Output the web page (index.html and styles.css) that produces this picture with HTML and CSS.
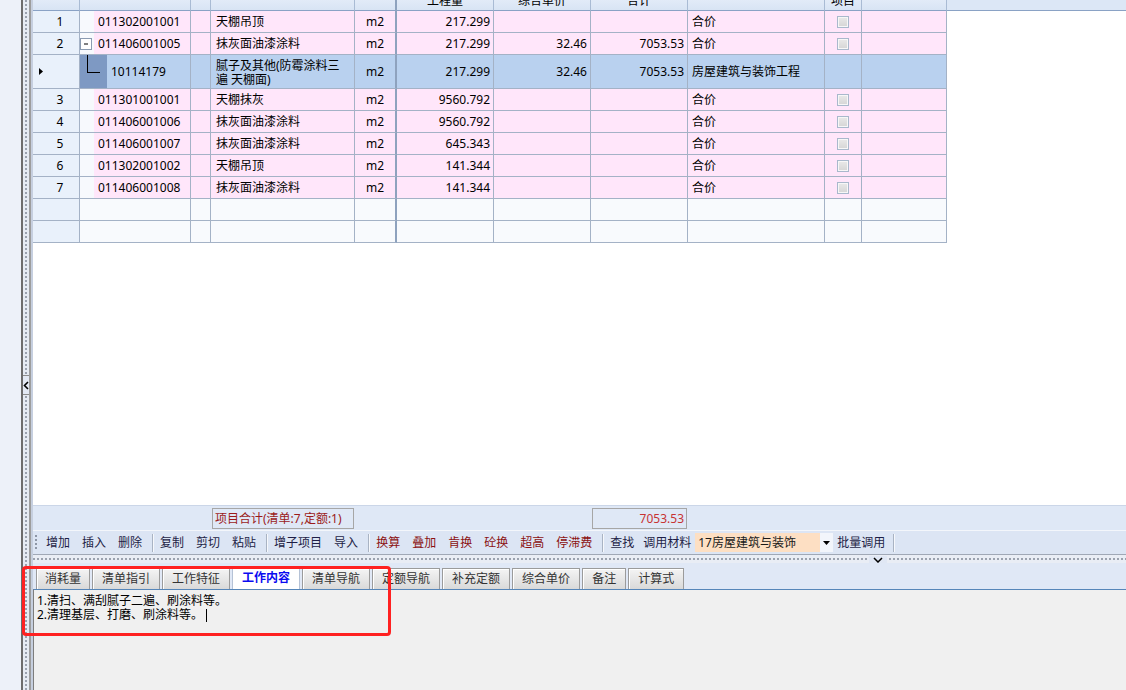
FILE: index.html
```html
<!DOCTYPE html>
<html lang="zh-CN">
<head>
<meta charset="utf-8">
<title>清单</title>
<link rel="stylesheet" href="styles.css">
</head>
<body>
<div class="app">
  <div class="side"></div>
  <div class="vsplit">
    <div class="vbtn"><svg width="6" height="9" viewBox="0 0 6 9"><polyline points="5,1 1.5,4.5 5,8" fill="none" stroke="#000" stroke-width="1.6"/></svg></div>
  </div>
  <div class="main">
    <div class="gridwrap">
      <div class="grid">
        <div class="row hdr">
          <div class="c"></div><div class="c"></div><div class="c"></div><div class="c"></div><div class="c u"></div>
          <div class="c"><span class="ht">工程量</span></div>
          <div class="c"><span class="ht">综合单价</span></div>
          <div class="c"><span class="ht">合计</span></div>
          <div class="c"></div>
          <div class="c"><span class="ht">项目</span></div>
          <div class="c"></div>
        </div>

        <div class="row">
          <div class="c rn">1</div>
          <div class="c code"><span class="ind"></span><span class="tx">011302001001</span></div>
          <div class="c"></div><div class="c nm">天棚吊顶</div><div class="c u">m2</div>
          <div class="c n">217.299</div><div class="c n"></div><div class="c n"></div>
          <div class="c t">合价</div><div class="c cb"><span class="chk"></span></div><div class="c"></div>
        </div>

        <div class="row">
          <div class="c rn">2</div>
          <div class="c code"><span class="ind"><svg class="exp" width="12" height="12" viewBox="0 0 12 12"><rect x="0.5" y="0.5" width="11" height="11" fill="#fff" stroke="#8b9bb2"/><line x1="4" y1="6" x2="8" y2="6" stroke="#000"/></svg></span><span class="tx">011406001005</span></div>
          <div class="c"></div><div class="c nm">抹灰面油漆涂料</div><div class="c u">m2</div>
          <div class="c n">217.299</div><div class="c n">32.46</div><div class="c n">7053.53</div>
          <div class="c t">合价</div><div class="c cb"><span class="chk"></span></div><div class="c"></div>
        </div>

        <div class="row tall sel">
          <div class="c rn cur"><svg width="4" height="7" viewBox="0 0 4 7"><polygon points="0,0 4,3.5 0,7" fill="#000"/></svg></div>
          <div class="c code"><span class="ind"><span class="conn"></span></span><span class="tx">10114179</span></div>
          <div class="c"></div><div class="c nm wrap">腻子及其他(防霉涂料三<br>遍 天棚面)</div><div class="c u">m2</div>
          <div class="c n">217.299</div><div class="c n">32.46</div><div class="c n">7053.53</div>
          <div class="c t">房屋建筑与装饰工程</div><div class="c cb"></div><div class="c"></div>
        </div>

        <div class="row">
          <div class="c rn">3</div>
          <div class="c code"><span class="ind"></span><span class="tx">011301001001</span></div>
          <div class="c"></div><div class="c nm">天棚抹灰</div><div class="c u">m2</div>
          <div class="c n">9560.792</div><div class="c n"></div><div class="c n"></div>
          <div class="c t">合价</div><div class="c cb"><span class="chk"></span></div><div class="c"></div>
        </div>

        <div class="row">
          <div class="c rn">4</div>
          <div class="c code"><span class="ind"></span><span class="tx">011406001006</span></div>
          <div class="c"></div><div class="c nm">抹灰面油漆涂料</div><div class="c u">m2</div>
          <div class="c n">9560.792</div><div class="c n"></div><div class="c n"></div>
          <div class="c t">合价</div><div class="c cb"><span class="chk"></span></div><div class="c"></div>
        </div>

        <div class="row">
          <div class="c rn">5</div>
          <div class="c code"><span class="ind"></span><span class="tx">011406001007</span></div>
          <div class="c"></div><div class="c nm">抹灰面油漆涂料</div><div class="c u">m2</div>
          <div class="c n">645.343</div><div class="c n"></div><div class="c n"></div>
          <div class="c t">合价</div><div class="c cb"><span class="chk"></span></div><div class="c"></div>
        </div>

        <div class="row">
          <div class="c rn">6</div>
          <div class="c code"><span class="ind"></span><span class="tx">011302001002</span></div>
          <div class="c"></div><div class="c nm">天棚吊顶</div><div class="c u">m2</div>
          <div class="c n">141.344</div><div class="c n"></div><div class="c n"></div>
          <div class="c t">合价</div><div class="c cb"><span class="chk"></span></div><div class="c"></div>
        </div>

        <div class="row">
          <div class="c rn">7</div>
          <div class="c code"><span class="ind"></span><span class="tx">011406001008</span></div>
          <div class="c"></div><div class="c nm">抹灰面油漆涂料</div><div class="c u">m2</div>
          <div class="c n">141.344</div><div class="c n"></div><div class="c n"></div>
          <div class="c t">合价</div><div class="c cb"><span class="chk"></span></div><div class="c"></div>
        </div>

        <div class="row empty">
          <div class="c rn"></div><div class="c"></div><div class="c"></div><div class="c"></div><div class="c u"></div>
          <div class="c"></div><div class="c"></div><div class="c"></div><div class="c"></div><div class="c"></div><div class="c"></div>
        </div>
        <div class="row empty">
          <div class="c rn"></div><div class="c"></div><div class="c"></div><div class="c"></div><div class="c u"></div>
          <div class="c"></div><div class="c"></div><div class="c"></div><div class="c"></div><div class="c"></div><div class="c"></div>
        </div>
      </div>
    </div>

    <div class="sumbar">
      <div class="sb"></div><div class="sb"></div><div class="sb"></div>
      <div class="sb"><div class="box lbl">项目合计(清单:7,定额:1)</div></div>
      <div class="sb"></div><div class="sb"></div><div class="sb"></div>
      <div class="sb"><div class="box val">7053.53</div></div>
      <div class="sb"></div><div class="sb"></div><div class="sb"></div>
    </div>

    <div class="toolbar">
      <span class="grip"></span>
      <span class="ti">增加</span><span class="ti">插入</span><span class="ti">删除</span>
      <span class="sep"></span>
      <span class="ti">复制</span><span class="ti">剪切</span><span class="ti">粘贴</span>
      <span class="sep"></span>
      <span class="ti">增子项目</span><span class="ti">导入</span>
      <span class="sep"></span>
      <span class="ti r">换算</span><span class="ti r">叠加</span><span class="ti r">肯换</span><span class="ti r">砼换</span><span class="ti r">超高</span><span class="ti r">停滞费</span>
      <span class="sep"></span>
      <span class="ti">查找</span><span class="ti nar">调用材料</span>
      <span class="combo"><span class="cv">17房屋建筑与装饰</span><span class="ca"><svg width="7" height="4" viewBox="0 0 7 4"><polygon points="0,0 7,0 3.5,4" fill="#000"/></svg></span></span>
      <span class="ti bat">批量调用</span>
      <span class="sep"></span>
    </div>

    <div class="hsplit">
      <span class="hbtn"><svg width="10" height="6" viewBox="0 0 10 6"><polyline points="1,1 5,5 9,1" fill="none" stroke="#000" stroke-width="1.5"/></svg></span>
    </div>

    <div class="tabbar">
      <span class="tab w8">消耗量</span>
      <span class="tab">清单指引</span>
      <span class="tab">工作特征</span>
      <span class="tab on">工作内容</span>
      <span class="tab">清单导航</span>
      <span class="tab">定额导航</span>
      <span class="tab">补充定额</span>
      <span class="tab">综合单价</span>
      <span class="tab w9">备注</span>
      <span class="tab w9">计算式</span>
    </div>

    <div class="content">
      <div>1.清扫、满刮腻子二遍、刷涂料等。</div>
      <div>2.清理基层、打磨、刷涂料等。<span class="caret"></span></div>
    </div>
  </div>
</div>
<div class="annot"></div>
</body>
</html>
```

FILE: styles.css
```css
html, body {
  margin: 0;
  padding: 0;
}
body {
  width: 1126px;
  height: 690px;
  overflow: hidden;
  position: relative;
  font-family: "Noto Sans", "Noto Sans CJK SC", sans-serif;
  font-size: 12px;
  color: #000;
  background: #fff;
}
.app {
  display: flex;
  height: 690px;
}
.side {
  width: 21px;
  flex: none;
  background: #edf1f9;
}
.vsplit {
  width: 12px;
  flex: none;
  box-sizing: border-box;
  background:
    linear-gradient(to right, #6c6c6c 0 2px, transparent 2px 8px, #9d9d9d 8px 10px, #c6cfdf 10px 12px),
    repeating-linear-gradient(to bottom, #9aa1ae 0 2px, transparent 2px 4px) 4px 0 / 2px 100% no-repeat,
    #e6ebf3;
}
.vbtn {
  margin-top: 375px;
  margin-left: 2px;
  width: 6px;
  height: 20px;
  box-sizing: border-box;
  background: #e3e9f4;
  border-top: 1px solid #8c8c8c;
  border-bottom: 1px solid #8c8c8c;
  display: flex;
  align-items: center;
  justify-content: center;
}
.main {
  flex: 1;
  display: flex;
  flex-direction: column;
  min-width: 0;
}
.gridwrap {
  height: 505px;
  flex: none;
  overflow: hidden;
  background: linear-gradient(to bottom, #dce7f6 0 10px, #8aa2c5 10px 11px, #fff 11px);
}
.grid {
  width: 914px;
}
.row {
  display: grid;
  grid-template-columns: 47px 111px 20px 144px 42px 97px 97px 97px 137px 37px 85px;
  height: 22px;
}
.row.hdr { height: 11px; }
.row.tall { height: 34px; }
.c {
  box-sizing: border-box;
  border-right: 1px solid #a4b2c6;
  border-bottom: 1px solid #a4b2c6;
  display: flex;
  align-items: center;
  overflow: hidden;
  white-space: nowrap;
  background: #ffe6fa;
  line-height: 14px;
}
.hdr .c {
  background: linear-gradient(#e2ebf8, #d8e4f4);
  border-bottom-color: #8aa2c5;
  border-right-color: #a9bbd4;
  align-items: flex-start;
  justify-content: center;
}
.ht {
  margin-top: -6px;
}
.c.u {
  justify-content: center;
  border-right: 2px solid #8ea2be;
}
.c.n {
  justify-content: flex-end;
  padding-right: 3px;
}
.c.t { padding-left: 4px; }
.c.nm { padding-left: 5px; }
.c.wrap {
  white-space: normal;
  padding-top: 2px;
  line-height: 14px;
}
.c.cb { justify-content: center; }
.c.rn {
  background: #e9f1fb;
  justify-content: center;
  padding-left: 8px;
}
.c.rn.cur {
  justify-content: flex-start;
  padding-left: 6px;
}
.c.code {
  padding: 0;
  align-items: stretch;
}
.ind {
  width: 14px;
  flex: none;
  background: #f7f9fd;
  display: flex;
  align-items: center;
}
.tx {
  display: flex;
  align-items: center;
  padding-left: 4px;
  flex: 1;
}
.sel .c { background: #b9d1ef; }
.sel .c.rn { background: #e9f1fb; }
.sel .ind {
  width: 27px;
  background: #7e99c3;
  display: block;
}
.conn {
  display: block;
  margin-left: 7px;
  width: 12px;
  height: 17px;
  border-left: 1px solid #000;
  border-bottom: 1px solid #000;
}
.empty .c { background: #f8fafd; }
.empty .c.rn { background: #e9f1fb; }
.chk {
  width: 12px;
  height: 12px;
  box-sizing: border-box;
  border: 1px solid #a9b8cc;
  background: linear-gradient(#e9e9e9, #d5d5d5);
  box-shadow: inset 0 0 0 1px #f7f7f7;
}

.sumbar {
  height: 25px;
  flex: none;
  box-sizing: border-box;
  border-top: 1px solid #cbd6e8;
  background: #dfe8f6;
  display: grid;
  grid-template-columns: 47px 111px 20px 144px 42px 97px 97px 97px 137px 37px 85px;
  width: 100%;
}
.sb {
  padding-top: 2px;
}
.box {
  height: 21px;
  box-sizing: border-box;
  border: 1px solid #a6a6a6;
  margin: 0 1px;
  line-height: 19px;
  white-space: nowrap;
  overflow: hidden;
}
.box.lbl {
  color: #9b1b1b;
  padding-left: 2px;
}
.box.val {
  color: #c73333;
  text-align: right;
  padding-right: 2px;
}

.toolbar {
  height: 24px;
  flex: none;
  box-sizing: border-box;
  border-top: 1px solid #f3f6fb;
  background: #dce5f4;
  display: flex;
  align-items: center;
  padding-left: 2px;
  white-space: nowrap;
}
.grip {
  width: 2px;
  height: 16px;
  margin-right: 3px;
  background: repeating-linear-gradient(to bottom, #8d96a6 0 2px, transparent 2px 4px);
}
.ti {
  padding: 0 6px;
  color: #1e1e46;
  line-height: 20px;
}
.ti.r { color: #8b1111; }
.ti.nar { padding: 0 4px 0 3px; }
.ti.bat { padding: 0 4px; }
.sep {
  width: 1px;
  height: 18px;
  background: #a9b3c3;
  border-right: 1px solid #f6f8fc;
  margin-left: 4px;
}
.combo {
  display: flex;
  height: 19px;
}
.cv {
  width: 122px;
  background: #fddfc3;
  padding-left: 3px;
  line-height: 19px;
  color: #1a1a1a;
}
.ca {
  width: 13px;
  background: #f2f5fb;
  display: flex;
  align-items: center;
  justify-content: center;
}

.hsplit {
  height: 9px;
  flex: none;
  box-sizing: border-box;
  border-top: 1px solid #a0a8b6;
  background:
    repeating-linear-gradient(to right, #9aa1ae 0 2px, transparent 2px 4px) 0 3px / 100% 2px no-repeat,
    #e9edf5;
  display: flex;
}
.hbtn {
  margin-left: 836px;
  width: 18px;
  height: 7px;
  margin-top: 1px;
  background: #e0e7f4;
  display: flex;
  align-items: center;
  justify-content: center;
}

.tabbar {
  height: 26px;
  flex: none;
  background: #e0e8f6;
  display: flex;
  align-items: flex-end;
  padding-left: 3px;
  gap: 2px;
}
.tab {
  height: 21px;
  box-sizing: border-box;
  border: 1px solid #9b9b9b;
  border-bottom: none;
  background: linear-gradient(#f4f4f4, #d9d9d9);
  box-shadow: inset 1px 1px 0 #fff;
  padding: 0 9px;
  line-height: 20px;
  color: #333;
  white-space: nowrap;
}
.tab.w8 { padding: 0 8px; }
.tab.w9 { padding: 0 9px; }
.tab.on {
  height: 22px;
  background: #fff;
  color: #0b0bf0;
  font-weight: bold;
  border-color: #b5c2d6;
  box-shadow: none;
}

.content {
  flex: 1;
  background: #f0f0f0;
  border-top: 1px solid #5686b9;
  border-left: 1px solid #7d7d7d;
  padding: 4px 4px 0 3px;
  line-height: 14px;
  color: #000;
}
.caret {
  display: inline-block;
  width: 1px;
  height: 13px;
  background: #000;
  vertical-align: middle;
  margin-left: 3px;
}

.annot {
  position: absolute;
  left: 22px;
  top: 566px;
  width: 369px;
  height: 70px;
  box-sizing: border-box;
  border: 3px solid #ff2121;
  border-radius: 4px;
  pointer-events: none;
}
```
